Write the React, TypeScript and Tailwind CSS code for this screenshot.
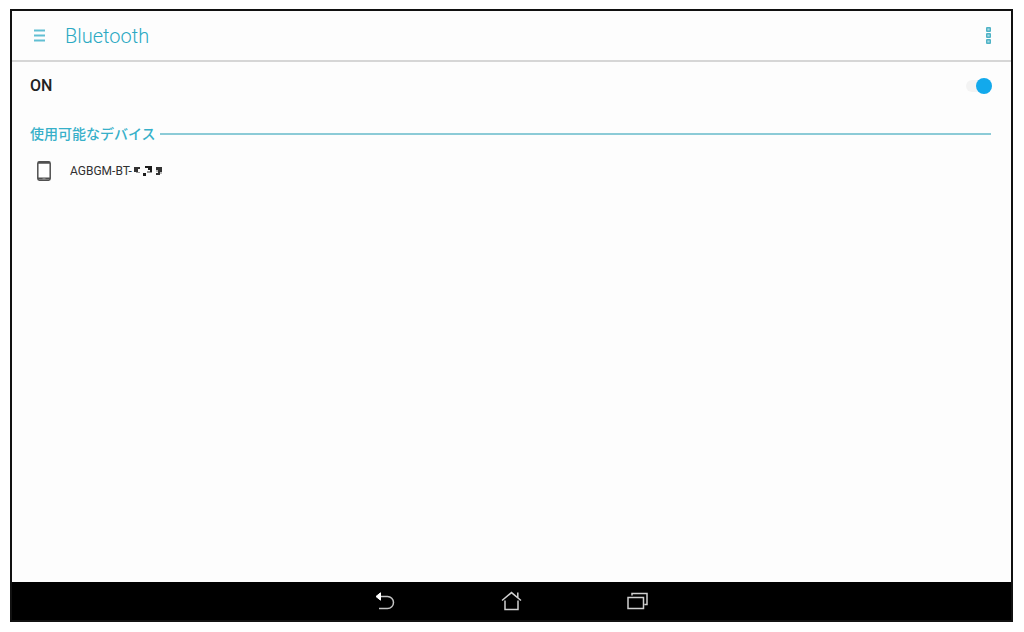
const jpFont = "font-['Roboto','Noto_Sans_CJK_JP',sans-serif]";

function RedactedSuffix() {
  return (
    <svg width="30" height="12" viewBox="0 0 30 12" aria-hidden="true">
      <path d="M2 2h6v2H6v3H2z" fill="#333" />
      <path d="M4 7h4v1H4z" fill="#999" />
      <path d="M11 8h3v3h-3zM13 1h7v6h-2V5h-2V3h-3z" fill="#1c1c1c" />
      <path d="M15 6h3v2h-3zM18 7h2v1h-2z" fill="#999" />
      <path d="M24 2h6v5h-2v3h-4V8h2V5h-2z" fill="#333" />
      <path d="M28 7h2v2h-2zM24 5h2v2h-2z" fill="#bbb" />
    </svg>
  );
}

function Header() {
  return (
    <header className="flex items-center justify-between h-[51px] pl-[22px] pr-5 border-b-2 border-[#d6d6d6]">
      <div className="flex items-center gap-5">
        <button type="button" aria-label="Open menu" className="block">
          <svg width="11" height="14" viewBox="0 0 11 14" fill="none" stroke="#62bfd3" strokeWidth="1.8">
            <path d="M0 1.5h11M0 6.5h11M0 11.5h11" />
          </svg>
        </button>
        <h1 className="text-xl leading-6 font-light text-[#2ba9c3]">Bluetooth</h1>
      </div>
      <button type="button" aria-label="More options" className="block">
        <svg width="5" height="17" viewBox="0 0 5 17" fill="#a9dbe5" stroke="#4fb3c6" strokeWidth="1.4">
          <rect x="0.7" y="0.7" width="3.6" height="3.6" rx="0.4" />
          <rect x="0.7" y="6.7" width="3.6" height="3.6" rx="0.4" />
          <rect x="0.7" y="12.7" width="3.6" height="3.6" rx="0.4" />
        </svg>
      </button>
    </header>
  );
}

function DeviceList() {
  return (
    <section className="pt-3 pl-[18px] pr-5">
      <div className="flex items-center gap-1 h-6">
        <h2 className="text-sm leading-6 font-medium text-[#37b0c9]">使用可能なデバイス</h2>
        <div className="flex-1 h-0.5 bg-[#8ccbd7]" />
      </div>
      <ul className="pt-3">
        <li>
          <button type="button" className="flex items-center w-full h-[26px] pl-[7px] text-left">
            <svg width="14" height="20" viewBox="0 0 14 20" aria-hidden="true">
              <rect x="0.8" y="0.8" width="12.4" height="18.4" rx="1.6" fill="#fff" stroke="#505050" strokeWidth="1.5" />
              <path d="M1 1.8h12M1 17.6h12" stroke="#505050" strokeWidth="2" />
              <path d="M5.5 17.8h3" stroke="#aaa" strokeWidth="0.8" />
            </svg>
            <span className="ml-[19px] text-xs leading-4 text-[#303030]">AGBGM-BT-</span>
            <RedactedSuffix />
          </button>
        </li>
      </ul>
    </section>
  );
}

function NavigationBar() {
  return (
    <nav className="flex items-center justify-center gap-[105px] h-[38px] bg-black">
      <button type="button" aria-label="Back" className="block">
        <svg width="21" height="20" viewBox="0 0 21 20" fill="none" stroke="#c4c4c4" strokeWidth="1.5">
          <path d="M5 5.5h7.5a6 6 0 0 1 0 12H4" />
          <path d="M1 5.5 5.5 1.8v7.4z" fill="#fff" stroke="#fff" strokeWidth="1" />
        </svg>
      </button>
      <button type="button" aria-label="Home" className="block">
        <svg width="21" height="20" viewBox="0 0 21 20" fill="none" stroke="#d0d0d0" strokeWidth="1.5">
          <path d="M1 9.5 10.5 1.6 20 9.5M16.8 6.5V1.5M4 9.5v9h13v-9" />
        </svg>
      </button>
      <button type="button" aria-label="Recent apps" className="block">
        <svg width="21" height="20" viewBox="0 0 21 20" fill="none" stroke="#d0d0d0" strokeWidth="1.5">
          <path d="M1 6.5h15.5v11H1zM5 4.5v-2h15v11h-2.5" />
        </svg>
      </button>
    </nav>
  );
}

export default function App() {
  return (
    <div className={`min-h-screen flex bg-white pt-[9px] pr-[11px] pb-2.5 pl-2.5 ${jpFont}`}>
      <div className="flex-1 flex flex-col border-2 border-[#111] bg-[#fdfdfd]">
        <Header />
        <main className="flex-1">
          <div className="flex items-center justify-between h-12 pl-[18px] pr-[19px]">
            <label htmlFor="bluetooth" className="text-base leading-6 font-medium text-[#222]">
              ON
            </label>
            <input
              id="bluetooth"
              type="checkbox"
              role="switch"
              defaultChecked
              className="appearance-none flex items-center justify-start checked:justify-end w-[26px] h-3 rounded-full bg-[#f3f3f3] before:block before:shrink-0 before:size-4 before:rounded-full before:bg-[#9e9e9e] checked:before:bg-[#12a9ec]"
            />
          </div>
          <DeviceList />
        </main>
        <NavigationBar />
      </div>
    </div>
  );
}
